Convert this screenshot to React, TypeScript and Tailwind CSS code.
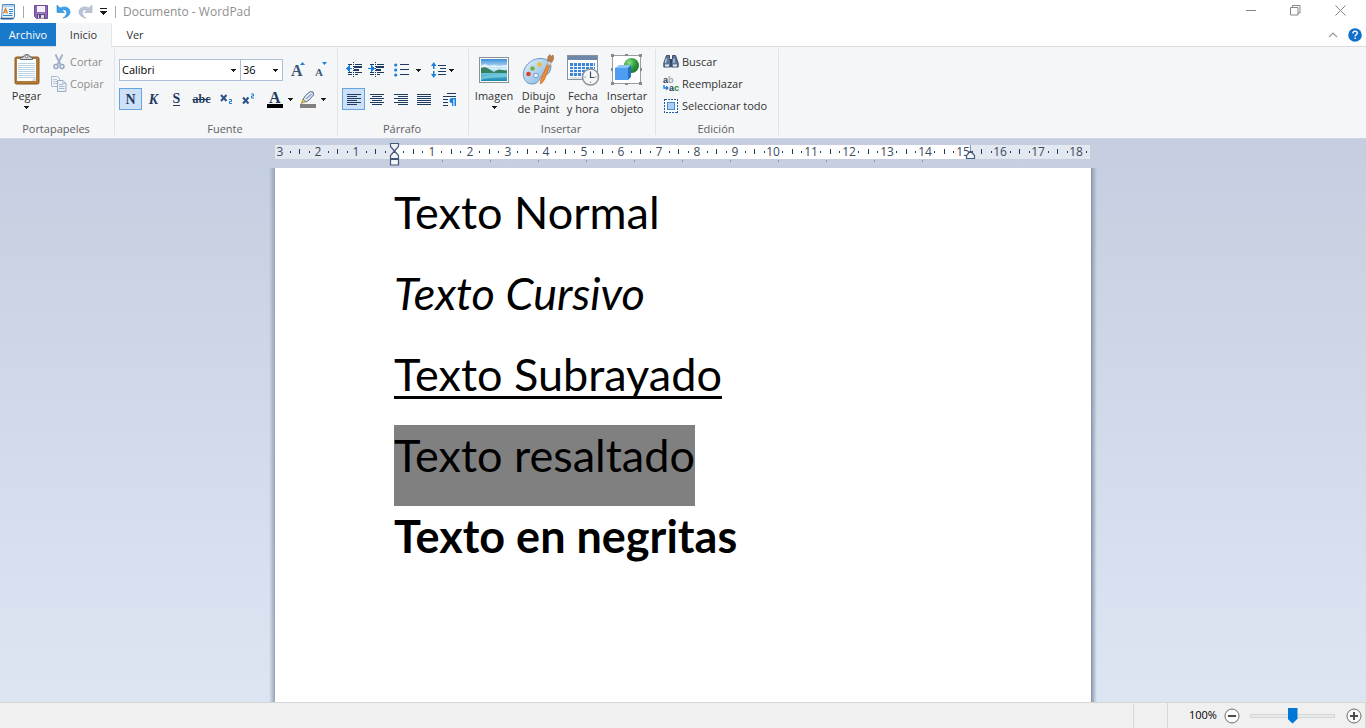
import type { ReactNode } from "react";

const INK = "#1e3a5f";
const BLUE = "#1a7fe0";

function DownArrow({ className = "" }: { className?: string }) {
  return (
    <svg width="5" height="3" viewBox="0 0 5 3" shapeRendering="crispEdges" className={`shrink-0 ${className}`} aria-hidden="true">
      <path d="M0 0h5v1h-1v1h-1v1h-1v-1h-1v-1h-1z" fill="#1b1b1b" />
    </svg>
  );
}

/* ---------- Title bar icons ---------- */

function AppIcon() {
  return (
    <svg width="16" height="18" viewBox="0 0 16 18" aria-hidden="true">
      <path d="M2.500 1.500h12v12.500l-2 2h-11z" fill="#eaf4fd" stroke="#4b8bc4" />
      <path d="M3 2v2M5 2v2M7 2v2M9 2v2M11 2v2M13 2v2" stroke="#7fb0da" />
      <path d="M3.500 10.500l2-5 2 5M4.200 9h2.600" fill="none" stroke="#e07b1f" strokeWidth="1.200" />
      <path d="M9 6.500h4M9 8.500h4M9 10.500h3.500M3 12.500h9.500" stroke="#3f86c6" />
      <path d="M0.500 15.500h13" stroke="#2c5f94" strokeWidth="1.500" />
    </svg>
  );
}

function SaveIcon() {
  return (
    <svg width="14" height="14" viewBox="0 0 14 14" aria-hidden="true">
      <path d="M0.500 0.500h13v13h-11l-2-2z" fill="#8f66b4" stroke="#704a98" />
      <rect x="3" y="1" width="8" height="6" fill="#f4f1f8" />
      <path d="M3 8.500h8" stroke="#a98bc8" />
      <rect x="3" y="9" width="8" height="4.500" fill="#5b4478" />
      <rect x="4" y="10" width="6" height="3.500" fill="#dcdce4" />
      <rect x="5" y="10" width="2" height="3" fill="#5c4478" />
    </svg>
  );
}

function UndoIcon() {
  return (
    <svg width="15" height="15" viewBox="0 0 15 15" aria-hidden="true">
      <path d="M1 1v7.500h7.500L6 6c3-1 5 .6 4.600 3.400-.3 2-1.600 3.400-3.600 4.600 4.800-.8 7.300-3.400 7-6.600C13.600 3.400 9 1.600 4 4z" fill="#3aa0e8" stroke="#2b8ad2" strokeWidth="0.600" />
    </svg>
  );
}

function RedoIcon() {
  return (
    <svg width="15" height="15" viewBox="0 0 15 15" aria-hidden="true">
      <path d="M14 1v7.500H6.500L9 6C6 5 4 6.600 4.400 9.400c.3 2 1.600 3.400 3.600 4.600-4.800-.8-7.300-3.400-7-6.600C1.400 3.400 6 1.600 11 4z" fill="#b9c3d3" stroke="#a5b1c4" strokeWidth="0.600" />
    </svg>
  );
}

/* ---------- Clipboard icons ---------- */

function PasteIcon() {
  return (
    <svg width="26" height="32" viewBox="0 0 26 32" aria-hidden="true">
      <rect x="1" y="3" width="24" height="27" rx="1.500" fill="#b27a34" stroke="#8b5a22" />
      <rect x="3" y="5" width="19" height="22" fill="#fdfeff" />
      <path d="M4 9.500h17M4 11.500h17M4 13.500h17M4 15.500h17M4 17.500h17M4 19.500h17M4 21.500h17M4 23.500h17" stroke="#bcd3e4" />
      <path d="M17 27l5-5v5z" fill="#d5dde5" />
      <path d="M6.500 5.500h12v-1.500l-3-1.500c0-3-5.500-3-5.500 0l-3.500 1.500z" fill="#d0d4d8" stroke="#5d646b" />
      <circle cx="12.700" cy="2.500" r="1.200" fill="#fff" stroke="#555" strokeWidth="0.700" />
    </svg>
  );
}

function CutIcon() {
  return (
    <svg width="12" height="16" viewBox="0 0 12 16" fill="none" aria-hidden="true">
      <path d="M2.500 0.500l5 10M9.500 0.500l-5 10" stroke="#9fb0c8" strokeWidth="1.800" />
      <circle cx="3" cy="12.500" r="2" stroke="#94a7c2" strokeWidth="1.500" />
      <circle cx="9" cy="12.500" r="2" stroke="#94a7c2" strokeWidth="1.500" />
    </svg>
  );
}

function CopyIcon() {
  return (
    <svg width="16" height="16" viewBox="0 0 16 16" aria-hidden="true">
      <path d="M0.500 0.500h6l2 2v8h-8z" fill="#f2f5f9" stroke="#aab9ce" />
      <path d="M2 3.500h4M2 5.500h5M2 7.500h4" stroke="#b9c6d8" />
      <path d="M6.500 4.500h5.500l3 3v8h-8.500z" fill="#eef2f8" stroke="#9bacc6" />
      <path d="M12 4.500v3h3M8 8.500h4M8 10.500h5.500M8 12.500h5.500" stroke="#a9b8ce" fill="none" />
    </svg>
  );
}

/* ---------- Font icons ---------- */

function GrowFontIcon() {
  return (
    <svg width="15" height="16" viewBox="0 0 15 16" className="overflow-visible" aria-hidden="true">
      <text x="0" y="14" fontFamily="'Liberation Serif', serif" fontWeight="700" fontSize="16" fill="#3a5474">A</text>
      <path d="M9 3l2.500-3 2.500 3z" fill={BLUE} />
    </svg>
  );
}

function ShrinkFontIcon() {
  return (
    <svg width="13" height="16" viewBox="0 0 13 16" className="overflow-visible" aria-hidden="true">
      <text x="0" y="14" fontFamily="'Liberation Serif', serif" fontWeight="700" fontSize="11" fill="#3a5474">A</text>
      <path d="M7 0l2.500 3L12 0z" fill={BLUE} />
    </svg>
  );
}

function FontColorIcon() {
  return (
    <svg width="16" height="17" viewBox="0 0 16 17" className="overflow-visible" aria-hidden="true">
      <text x="2" y="12" fontFamily="'Liberation Serif', serif" fontWeight="700" fontSize="16" fill={INK}>A</text>
      <rect y="13" width="16" height="4" fill="#000" />
    </svg>
  );
}

function HighlightIcon() {
  return (
    <svg width="16" height="17" viewBox="0 0 16 17" aria-hidden="true">
      <path d="M3 8.500l2.500-4L10 .7l3 .3.500 3L9 9l-3 2z" fill="#e6edf5" stroke="#4d6688" />
      <path d="M6 8l5.500-5" stroke="#8fa9c8" strokeWidth="1.500" />
      <path d="M1 12.500l2-4.500 3 2.700z" fill="#e8c33a" stroke="#6b6b4a" strokeWidth="0.500" />
      <rect y="13" width="16" height="4" fill="#808080" />
    </svg>
  );
}

/* ---------- Paragraph icons ---------- */

function IndentIcon({ increase = false }: { increase?: boolean }) {
  return (
    <svg width="16" height="16" viewBox="0 0 16 16" shapeRendering="crispEdges" aria-hidden="true">
      <path d="M2 2.500h4M9 2.500h7M2 10.500h4M9 10.500h7M2 12.500h4M9 12.500h3" stroke={INK} />
      <rect x="8" y="4" width="8" height="2" fill={INK} />
      <rect x="8" y="7" width="5" height="2" fill={INK} />
      <path d="M7.500 0v15" stroke={INK} strokeDasharray="1 1" />
      {increase ? (
        <path d="M0 6h3v-3l4 3.500-4 3.500v-3h-3z" fill={BLUE} />
      ) : (
        <path d="M6 6h-2v-3l-4 3.500 4 3.500v-3h2z" fill={BLUE} />
      )}
    </svg>
  );
}

function BulletsIcon() {
  return (
    <svg width="15" height="14" viewBox="0 0 15 14" aria-hidden="true">
      <circle cx="1.700" cy="2" r="1.600" fill={BLUE} />
      <circle cx="1.700" cy="7" r="1.600" fill={BLUE} />
      <circle cx="1.700" cy="12" r="1.600" fill={BLUE} />
      <path d="M6 1.500h9M6 6.500h9M6 11.500h9" stroke={INK} />
    </svg>
  );
}

function LineSpacingIcon() {
  return (
    <svg width="16" height="16" viewBox="0 0 16 16" aria-hidden="true">
      <path d="M0 4l2.700-4 2.800 4H3.500v3h-1.500V4zM0 12l2.700 4 2.800-4H3.500V9h-1.500v3z" fill={BLUE} />
      <path d="M7 3.500h8M9 6.500h6M7 9.500h8M7 12.500h8" stroke={INK} />
    </svg>
  );
}

const ALIGN_PATHS = {
  left: "M0 .5h14M0 2.500h10M0 4.500h14M0 6.500h10M0 8.500h14M0 10.500h10",
  center: "M0 .5h14M2 2.500h10M0 4.500h14M2 6.500h10M0 8.500h14M2 10.500h10",
  right: "M0 .5h14M4 2.500h10M0 4.500h14M4 6.500h10M0 8.500h14M4 10.500h10",
  justify: "M0 .5h14M0 2.500h14M0 4.500h14M0 6.500h14M0 8.500h14M0 10.500h14",
};

function AlignIcon({ kind }: { kind: keyof typeof ALIGN_PATHS }) {
  return (
    <svg width="14" height="11" viewBox="0 0 14 11" shapeRendering="crispEdges" aria-hidden="true">
      <path d={ALIGN_PATHS[kind]} stroke={INK} />
    </svg>
  );
}

function ParagraphIcon() {
  return (
    <svg width="14" height="15" viewBox="0 0 14 15" aria-hidden="true">
      <path d="M4 1.500h9M0 4.500h13M0 7.500h5M0 10.500h5M0 13.500h5" stroke={INK} />
      <path d="M13 6H9a2.500 2.500 0 000 5v3h1.300V7.200h1.200V14H13z" fill={BLUE} />
    </svg>
  );
}

/* ---------- Insert icons ---------- */

function PictureIcon() {
  return (
    <svg width="32" height="32" viewBox="0 0 32 32" aria-hidden="true">
      <defs>
        <linearGradient id="sky" x1="0" y1="0" x2="0" y2="1">
          <stop offset="0" stopColor="#3a8ed6" />
          <stop offset="0.450" stopColor="#d9f1fc" />
          <stop offset="0.600" stopColor="#7acbe0" />
          <stop offset="1" stopColor="#1a86b4" />
        </linearGradient>
      </defs>
      <rect x="1.500" y="3.500" width="29" height="25" fill="#fff" stroke="#8c9199" />
      <rect x="3" y="5" width="26" height="22" fill="url(#sky)" />
      <path d="M3 12l4-2 4 2 5-1 5 1 8-1v2H3z" fill="#fff" opacity="0.700" />
      <path d="M3 14c3-1 5-1 8 1l5 3 3 1H3zM17 17l4-1.500 3 .5 5 .5v2.500H17z" fill="#35805f" />
      <path d="M3 23c8-3 18-2 26-3v3c-8 1-18 0-26 3z" fill="#79d2df" opacity="0.700" />
    </svg>
  );
}

function PaintIcon() {
  return (
    <svg width="33" height="32" viewBox="0 0 33 32" aria-hidden="true">
      <defs>
        <linearGradient id="palette" x1="0" y1="0" x2="1" y2="1">
          <stop offset="0" stopColor="#e3f1fb" />
          <stop offset="1" stopColor="#7fb0dd" />
        </linearGradient>
      </defs>
      <path d="M2 24C-1 15 7 5 18 4.500c9-.5 13 6 10 12.500-3 6-8 3.500-9.500 6.500-1.500 4-4 6.500-8.500 6.500-4 0-6.800-2.500-8-6z" fill="url(#palette)" stroke="#6b98c4" />
      <circle cx="6.500" cy="20" r="2.300" fill="#d8402f" />
      <circle cx="10.500" cy="14.500" r="2.300" fill="#6fb53c" />
      <circle cx="17.500" cy="10.500" r="2.300" fill="#eebd2e" />
      <circle cx="14" cy="21.500" r="2.300" fill="#f6fafd" stroke="#6b98c4" />
      <path d="M18.500 30c-.5-2 .5-6 2-9l5-11 2.500 1-4.500 12c-1 3-3 6-5 7z" fill="#ee8a32" stroke="#c2611a" strokeWidth="0.600" />
      <path d="M25 10.500l1.500-4 3.500 1.500-2 3.500z" fill="#cfd4da" stroke="#8b9097" strokeWidth="0.500" />
      <path d="M26 7c-1-3 0-5 2-6.500l1 2 2-1.500c1 2 1 4-1 7z" fill="#b97f4d" stroke="#8c5a30" strokeWidth="0.500" />
    </svg>
  );
}

function DateIcon() {
  return (
    <svg width="33" height="32" viewBox="0 0 33 32" aria-hidden="true">
      <rect x="0.500" y="1.500" width="30" height="24" fill="#fff" stroke="#8793a3" />
      <rect x="1" y="2" width="29" height="4" fill="#6f87a8" />
      <path d="M3 9h25v13H3z" fill="#3d84d6" />
      <path d="M3 12.500h25M3 15.500h25M3 18.500h25M6.500 9v13M10.500 9v13M14.500 9v13M18.500 9v13M22.500 9v13M26.500 9v13" stroke="#e8f2fc" />
      <path d="M3 24h12" stroke="#bfc8d3" />
      <circle cx="23.500" cy="23" r="8" fill="#f4f6f8" stroke="#8b929b" strokeWidth="1.500" />
      <path d="M23.500 17v1.500M23.500 27.500v1.500M17.500 23h1.500M28 23h1.500" stroke="#8b929b" />
      <path d="M23.500 18v5.500h4" fill="none" stroke="#44505e" strokeWidth="1.200" />
    </svg>
  );
}

function ObjectIcon() {
  return (
    <svg width="32" height="32" viewBox="0 0 32 32" aria-hidden="true">
      <defs>
        <radialGradient id="ball" cx="0.350" cy="0.300" r="0.800">
          <stop offset="0" stopColor="#8fe08a" />
          <stop offset="0.500" stopColor="#2f9e3b" />
          <stop offset="1" stopColor="#16702a" />
        </radialGradient>
      </defs>
      <rect x="1.500" y="1.500" width="28" height="28" fill="#fff" stroke="#9a9da3" />
      <circle cx="20.500" cy="11.500" r="7.500" fill="url(#ball)" />
      <path d="M4 14l4-3h12l-3 3z" fill="#8cc2fa" />
      <path d="M17 14l3-3v12l-3 3z" fill="#2a6fc4" />
      <rect x="4" y="14" width="13" height="12" fill="#4d9df0" />
      <g fill="#85898f">
        <rect width="3" height="3" />
        <rect x="14" width="3" height="2" />
        <rect x="28" width="3" height="3" />
        <rect y="14" width="2" height="3" />
        <rect x="29" y="14" width="2" height="3" />
        <rect y="28" width="3" height="3" />
        <rect x="14" y="29" width="3" height="2" />
        <rect x="28" y="28" width="3" height="3" />
      </g>
    </svg>
  );
}

/* ---------- Editing icons ---------- */

function FindIcon() {
  return (
    <svg width="16" height="16" viewBox="0 0 16 16" aria-hidden="true">
      <path d="M3.500 1.500h3v3l1 2v6.500H.8V9zM12.500 1.500h-3v3l-1 2v6.500h6.700V9z" fill="#5f7696" stroke="#2b4366" strokeWidth="0.900" />
      <rect x="7" y="5" width="2" height="4" fill="#2b4366" />
      <path d="M3.500 4.500L2.300 9M11 4.500V9" stroke="#cbd7e6" strokeWidth="1.200" />
      <path d="M2 10.500h4v2H2zM10 10.500h4v2h-4z" fill="#e4ebf4" />
    </svg>
  );
}

function ReplaceIcon() {
  return (
    <svg width="16" height="16" viewBox="0 0 16 16" fontFamily="'Liberation Sans', sans-serif" fontWeight="700" fontSize="9" className="overflow-visible" aria-hidden="true">
      <text x="0" y="7" fill={INK}>a<tspan fill="#a3a8ae">b</tspan></text>
      <text x="6" y="15" fill={INK}>a<tspan fill="#1d8a2b">c</tspan></text>
      <path d="M1 9v3h3" fill="none" stroke={BLUE} strokeWidth="1.400" />
      <path d="M3 9.500L6 12l-3 2.500z" fill={BLUE} />
    </svg>
  );
}

function SelectAllIcon() {
  return (
    <svg width="16" height="16" viewBox="0 0 16 16" shapeRendering="crispEdges" aria-hidden="true">
      <rect x="1.500" y="1.500" width="13" height="13" fill="#fff" stroke="#1f5f9f" strokeDasharray="2 1" />
      <rect x="4.500" y="4.500" width="7" height="7" fill="#a9d1f8" stroke="#4a8fd6" />
    </svg>
  );
}

/* ---------- Ribbon building blocks ---------- */

function Group({ label, className, children }: { label: string; className: string; children: ReactNode }) {
  return (
    <section aria-label={label} className={`flex h-[86px] shrink-0 flex-col border-r border-[#e1e3e6] ${className}`}>
      <div className="h-[74px] shrink-0">{children}</div>
      <h2 className="pr-[2px] text-center text-[11px] leading-3 text-[#5d6066]">{label}</h2>
    </section>
  );
}

function ToolButton({ label, className, pressed = false, children }: { label: string; className: string; pressed?: boolean; children: ReactNode }) {
  return (
    <button
      type="button"
      aria-label={label}
      aria-pressed={pressed}
      className={`flex h-[22px] shrink-0 items-center justify-center border ${pressed ? "border-[#66a3e0] bg-[#cce0f7]" : "border-transparent"} ${className}`}
    >
      {children}
    </button>
  );
}

function BigButton({ icon, lines, arrow = false, className }: { icon: ReactNode; lines: string[]; arrow?: boolean; className: string }) {
  return (
    <button type="button" className={`flex flex-col items-center whitespace-nowrap text-[11px] leading-[13px] text-[#333] ${className}`}>
      <span className="mb-[3px] flex h-8 items-center">{icon}</span>
      {lines.map((line) => (
        <span key={line}>{line}</span>
      ))}
      {arrow && <DownArrow className="mt-1" />}
    </button>
  );
}

function SmallButton({ icon, label, disabled = false }: { icon: ReactNode; label: string; disabled?: boolean }) {
  return (
    <button
      type="button"
      disabled={disabled}
      className={`flex h-[22px] items-center gap-[3px] whitespace-nowrap text-[11px] ${disabled ? "text-[#8d8d8d]" : "text-[#333]"}`}
    >
      <span className="flex w-4 justify-center">{icon}</span>
      {label}
    </button>
  );
}

function Combo({ label, value, className }: { label: string; value: string; className: string }) {
  return (
    <span className={`grid h-[22px] items-center border border-[#abbfd9] bg-white ${className}`}>
      <select aria-label={label} defaultValue={value} className="col-start-1 row-start-1 w-full appearance-none bg-transparent pl-0.5 text-[11px] leading-5 text-black outline-none">
        <option>{value}</option>
      </select>
      <DownArrow className="pointer-events-none col-start-1 row-start-1 mr-1 justify-self-end" />
    </span>
  );
}

/* ---------- Ruler ---------- */

const CM = 37.9;
const ORIGIN = 119;
const END = 695;
const quarters = Array.from({ length: 86 }, (_, i) => i - 12).filter((q) => q !== 0 && q <= 73);

function Ruler() {
  return (
    <svg width="816" height="29" viewBox="0 0 816 29" role="img" aria-label="Regla" fontFamily="'Open Sans', sans-serif" fontSize="12" className="shrink-0">
      <rect y="6" width="815" height="14" fill="#e4e8f0" />
      <rect x={ORIGIN} y="6" width={END - ORIGIN} height="14" fill="#fff" />
      {quarters.map((q) => {
        const x = Math.round(ORIGIN + (q * CM) / 4);
        if (q % 4 === 0) {
          return (
            <text key={q} x={x} y="17" textAnchor="middle" fill="#3c4a60">
              {Math.abs(q / 4)}
            </text>
          );
        }
        return q % 2 === 0 ? (
          <rect key={q} x={x} y="10" width="1" height="5" fill={INK} />
        ) : (
          <rect key={q} x={x} y="12" width="1" height="2" fill={INK} />
        );
      })}
      {Array.from({ length: 11 }, (_, i) => (
        <rect key={i} x={ORIGIN + 48 * (i + 1)} y="21" width="1" height="2" fill="#8a97ab" />
      ))}
      <g fill="#f3f5f8" stroke="#44597a" strokeWidth="1.200">
        <path d="M115.500 4.500h8v3l-4 4.500-4-4.500z" />
        <path d="M119.500 12l4 4.500v3h-8v-3z" />
        <path d="M115.500 20.500h8v5.500h-8z" />
        <path d="M695.500 12l4 4.500v3h-8v-3z" />
      </g>
      <path d="M695.500 6v6" stroke="#8a97ab" />
    </svg>
  );
}

/* ---------- Page ---------- */

export default function App() {
  return (
    <div className="flex h-screen flex-col overflow-hidden bg-white font-['Open_Sans',sans-serif] text-[11px] text-[#333]">
      <header className="flex h-[23px] shrink-0 items-center justify-between">
        <div className="flex items-center">
          <AppIcon />
          <span className="ml-[7px] h-3 w-px bg-[#a8a8a8]" />
          <button type="button" aria-label="Guardar" className="ml-[10px]"><SaveIcon /></button>
          <button type="button" aria-label="Deshacer" className="ml-2"><UndoIcon /></button>
          <button type="button" aria-label="Rehacer" className="ml-[7px]"><RedoIcon /></button>
          <button type="button" aria-label="Personalizar barra" className="ml-[7px]">
            <svg width="7" height="7" viewBox="0 0 7 7" shapeRendering="crispEdges" aria-hidden="true">
              <path d="M0 0h7v1H0zM0 3h7v1H6v1H5v1H4v1H3V6H2V5H1V4H0z" fill="#1b1b1b" />
            </svg>
          </button>
          <span className="ml-2 h-3 w-px bg-[#a8a8a8]" />
          <h1 className="ml-[7px] pt-px text-[12px] leading-4 text-[#8f8f8f]">Documento - WordPad</h1>
        </div>
        <div className="flex h-[21px] self-start pr-[3px]">
          <button type="button" aria-label="Minimizar" className="flex w-[45px] items-center justify-center">
            <svg width="10" height="11" viewBox="0 0 10 11" aria-hidden="true"><path d="M0 5.500h10" stroke="#858585" /></svg>
          </button>
          <button type="button" aria-label="Restaurar" className="flex w-[45px] items-center justify-center">
            <svg width="11" height="11" viewBox="0 0 11 11" fill="none" stroke="#858585" aria-hidden="true">
              <path d="M.5 2.500h7.500v7.500H.5zM2.500 2.500V.5h7.500v7.500H8" />
            </svg>
          </button>
          <button type="button" aria-label="Cerrar" className="flex w-[45px] items-center justify-center">
            <svg width="11" height="11" viewBox="0 0 11 11" stroke="#858585" aria-hidden="true"><path d="M.5.5l10 10M10.500.5l-10 10" /></svg>
          </button>
        </div>
      </header>

      <nav className="flex h-6 shrink-0">
        <button type="button" className="w-14 border-b border-[#dadbdc] bg-[#1979ca] bg-clip-padding pt-px text-white">Archivo</button>
        <button type="button" className="w-14 border-r border-[#e4e5e7] bg-[#f5f6f7]">Inicio</button>
        <button type="button" className="w-[46px] border-b border-[#dadbdc] pt-px">Ver</button>
        <div className="flex flex-1 items-center justify-end gap-[10px] border-b border-[#dadbdc] pr-1">
          <button type="button" aria-label="Minimizar la cinta de opciones">
            <svg width="10" height="6" viewBox="0 0 10 6" fill="none" stroke="#9a9a9a" strokeWidth="1.200" aria-hidden="true"><path d="M1 5l4-4 4 4" /></svg>
          </button>
          <button type="button" aria-label="Ayuda">
            <svg width="14" height="14" viewBox="0 0 14 14" aria-hidden="true">
              <circle cx="7" cy="7" r="6.800" fill="#0f6fcb" />
              <path d="M4.900 5.400c0-3 4.400-3 4.400-.3 0 1.700-2.200 1.700-2.200 3.400M7.100 9.600v1.500" fill="none" stroke="#fff" strokeWidth="1.400" />
            </svg>
          </button>
        </div>
      </nav>

      <div className="flex h-[92px] shrink-0 items-start border-b border-[#ced4dd] bg-[#f5f6f7] pt-[2px]">
        <Group label="Portapapeles" className="w-[115px]">
          <div className="flex">
            <BigButton icon={<PasteIcon />} lines={["Pegar"]} arrow className="ml-1 w-[45px] pt-[5px]" />
            <div className="ml-[2px] flex flex-col pt-[2px]">
              <SmallButton icon={<CutIcon />} label="Cortar" disabled />
              <SmallButton icon={<CopyIcon />} label="Copiar" disabled />
            </div>
          </div>
        </Group>

        <Group label="Fuente" className="w-[223px]">
          <div className="flex flex-col gap-[7px] pl-1 pt-[10px]">
            <div className="flex items-center">
              <Combo label="Familia de fuente" value="Calibri" className="w-[122px]" />
              <Combo label="Tamaño de fuente" value="36" className="-ml-px w-[43px]" />
              <ToolButton label="Agrandar fuente" className="ml-1 w-[23px]"><GrowFontIcon /></ToolButton>
              <ToolButton label="Reducir fuente" className="w-[23px]"><ShrinkFontIcon /></ToolButton>
            </div>
            <div className="flex items-center text-[#1e3a5f]">
              <ToolButton label="Negrita" pressed className="w-[23px]"><span className="font-['Liberation_Serif',serif] text-[14px] font-bold">N</span></ToolButton>
              <ToolButton label="Cursiva" className="w-[23px]"><span className="font-['Liberation_Serif',serif] text-[14px] font-bold italic">K</span></ToolButton>
              <ToolButton label="Subrayado" className="w-[23px]"><span className="border-b border-[#1e3a5f] font-['Liberation_Serif',serif] text-[14px] font-bold leading-3">S</span></ToolButton>
              <ToolButton label="Tachado" className="w-[27px]"><span className="font-['Liberation_Serif',serif] text-[12px] font-bold line-through">abc</span></ToolButton>
              <ToolButton label="Subíndice" className="w-[22px]">
                <svg width="13" height="12" viewBox="0 0 13 12" aria-hidden="true"><path d="M1 2l5.500 6M6.500 2L1 8" stroke="#2b5288" strokeWidth="2" /><path d="M9 6.500h2.500v2H9.500v2H12" fill="none" stroke={BLUE} /></svg>
              </ToolButton>
              <ToolButton label="Superíndice" className="w-[23px]">
                <svg width="13" height="12" viewBox="0 0 13 12" aria-hidden="true"><path d="M1 4.500l5.500 6M6.500 4.500L1 10.500" stroke="#2b5288" strokeWidth="2" /><path d="M9 1h2.500v2H9.500v2H12" fill="none" stroke={BLUE} /></svg>
              </ToolButton>
              <ToolButton label="Color de texto" className="ml-[3px] w-[33px] gap-[5px]"><FontColorIcon /><DownArrow /></ToolButton>
              <ToolButton label="Color de resaltado" className="w-[33px] gap-[5px]"><HighlightIcon /><DownArrow /></ToolButton>
            </div>
          </div>
        </Group>

        <Group label="Párrafo" className="w-[131px]">
          <div className="flex flex-col gap-[7px] pl-1 pt-[10px]">
            <div className="flex items-center">
              <ToolButton label="Reducir sangría" className="w-[23px]"><IndentIcon /></ToolButton>
              <ToolButton label="Aumentar sangría" className="w-[22px]"><IndentIcon increase /></ToolButton>
              <ToolButton label="Lista con viñetas" className="ml-1 w-8 gap-[7px]"><BulletsIcon /><DownArrow /></ToolButton>
              <ToolButton label="Interlineado" className="ml-[5px] w-7 gap-[2px]"><LineSpacingIcon /><DownArrow /></ToolButton>
            </div>
            <div className="flex items-center">
              <ToolButton label="Alinear a la izquierda" pressed className="w-[23px]"><AlignIcon kind="left" /></ToolButton>
              <ToolButton label="Centrar" className="w-6"><AlignIcon kind="center" /></ToolButton>
              <ToolButton label="Alinear a la derecha" className="w-[23px]"><AlignIcon kind="right" /></ToolButton>
              <ToolButton label="Justificar" className="w-6"><AlignIcon kind="justify" /></ToolButton>
              <ToolButton label="Párrafo" className="ml-[2px] w-[23px]"><ParagraphIcon /></ToolButton>
            </div>
          </div>
        </Group>

        <Group label="Insertar" className="w-[187px]">
          <div className="flex items-start pl-[3px] pt-[5px]">
            <BigButton icon={<PictureIcon />} lines={["Imagen"]} arrow className="w-11" />
            <BigButton icon={<PaintIcon />} lines={["Dibujo", "de Paint"]} className="w-[45px]" />
            <BigButton icon={<DateIcon />} lines={["Fecha", "y hora"]} className="w-11" />
            <BigButton icon={<ObjectIcon />} lines={["Insertar", "objeto"]} className="w-11" />
          </div>
        </Group>

        <Group label="Edición" className="w-[123px]">
          <div className="flex flex-col items-start pl-[7px] pt-[2px]">
            <SmallButton icon={<FindIcon />} label="Buscar" />
            <SmallButton icon={<ReplaceIcon />} label="Reemplazar" />
            <SmallButton icon={<SelectAllIcon />} label="Seleccionar todo" />
          </div>
        </Group>
      </div>

      <main className="flex min-h-0 flex-1 flex-col items-center bg-linear-to-b from-[#c4cee0] to-[#dce6f3]">
        <Ruler />
        <div className="flex min-h-0 flex-1">
          <span className="w-[6px] bg-linear-to-r from-[#c4cee0]/0 to-[#97a3b8]" />
          <article className="w-[816px] bg-white pl-[119px] pt-[14px] font-['Lato',sans-serif] text-[45px] leading-[60px] text-black">
            <p className="pb-[21px]">Texto Normal</p>
            <p className="pb-[21px] italic">Texto Cursivo</p>
            <p className="pb-[21px] underline decoration-[3px] underline-offset-[5px] [text-decoration-skip-ink:none]">Texto Subrayado</p>
            <p className="w-fit bg-[#808080] pb-[21px]">Texto resaltado</p>
            <p className="font-bold">Texto en negritas</p>
          </article>
          <span className="w-[6px] border-l border-[#8896ab] bg-linear-to-l from-[#c4cee0]/0 to-[#97a3b8]" />
        </div>
      </main>

      <footer className="flex h-[26px] shrink-0 items-center justify-end border-t border-[#d7d7d7] bg-[#f0f0f0] text-black">
        <span className="h-full w-px bg-[#d7d7d7]" />
        <span className="ml-[33px] h-full w-px bg-[#d7d7d7]" />
        <label htmlFor="zoom" className="ml-[21px] w-[28px] text-[11px]">100%</label>
        <button type="button" aria-label="Alejar" className="ml-[7px]">
          <svg width="16" height="16" viewBox="0 0 16 16" aria-hidden="true">
            <circle cx="8" cy="8" r="7" fill="#fafafa" stroke="#6e6e6e" />
            <path d="M4 8h8" stroke="#4a4a4a" strokeWidth="2" />
          </svg>
        </button>
        <input
          id="zoom"
          type="range"
          defaultValue={50}
          className="ml-[10px] h-4 w-[85px] appearance-none bg-transparent [&::-webkit-slider-runnable-track]:h-1 [&::-webkit-slider-runnable-track]:border [&::-webkit-slider-runnable-track]:border-[#d6d6d6] [&::-webkit-slider-runnable-track]:bg-[#e7eaea] [&::-webkit-slider-thumb]:-mt-[7px] [&::-webkit-slider-thumb]:h-4 [&::-webkit-slider-thumb]:w-[10px] [&::-webkit-slider-thumb]:appearance-none [&::-webkit-slider-thumb]:bg-[#0078d7] [&::-webkit-slider-thumb]:[clip-path:polygon(0_0,100%_0,100%_70%,50%_100%,0_70%)]"
        />
        <button type="button" aria-label="Acercar" className="ml-[11px]">
          <svg width="16" height="16" viewBox="0 0 16 16" aria-hidden="true">
            <circle cx="8" cy="8" r="7" fill="#fafafa" stroke="#6e6e6e" />
            <path d="M4 8h8M8 4v8" stroke="#4a4a4a" strokeWidth="2" />
          </svg>
        </button>
        <span className="ml-[3px] h-full w-px bg-[#d7d7d7]" />
      </footer>
    </div>
  );
}
